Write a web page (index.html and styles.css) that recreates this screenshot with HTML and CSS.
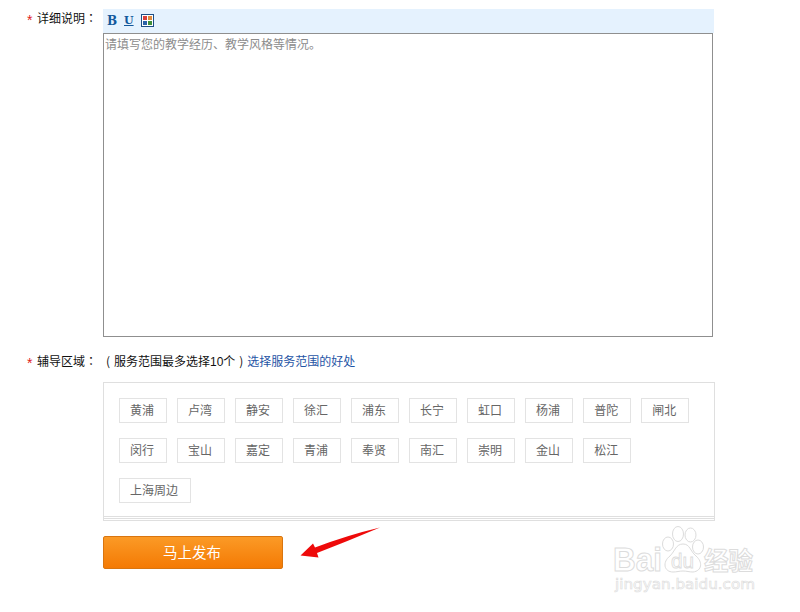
FILE: index.html
```
<!DOCTYPE html>
<html lang="zh-CN">
<head>
    <meta charset="UTF-8">
    <meta name="viewport" content="width=device-width, initial-scale=1.0">
    <title>发布家教信息</title>
    <link rel="stylesheet" href="styles.css">
</head>
<body>
    <form class="publish-form">
        <!-- Description -->
        <div class="form-row row-desc">
            <div class="row-label"><span class="required">*</span>详细说明<span class="mark">：</span></div>
            <div class="editor">
                <div class="toolbar">
                    <span class="tool tool-bold">B</span>
                    <span class="tool tool-underline">U</span>
                    <svg class="tool-color" width="13" height="13" viewBox="0 0 13 13">
                        <rect x="0.5" y="0.5" width="12" height="12" fill="#fff" stroke="#1d4f86"/>
                        <rect x="2" y="2" width="4" height="4" fill="#d8403c"/>
                        <rect x="7" y="2" width="4" height="4" fill="#e08a3c"/>
                        <rect x="2" y="7" width="4" height="4" fill="#2b62a8"/>
                        <rect x="7" y="7" width="4" height="4" fill="#3f8f3a"/>
                    </svg>
                </div>
                <textarea class="editor-text" placeholder="请填写您的教学经历、教学风格等情况。"></textarea>
            </div>
        </div>

        <!-- Service areas -->
        <div class="form-row row-area">
            <div class="row-label"><span class="required">*</span>辅导区域<span class="mark">：</span></div>
            <div class="area-tip"><span class="mark">(</span>服务范围最多选择10个<span class="mark">)</span><a class="tip-link" href="#">选择服务范围的好处</a></div>
        </div>
        <div class="area-box">
            <ul class="area-list">
                <li>黄浦</li>
                <li>卢湾</li>
                <li>静安</li>
                <li>徐汇</li>
                <li>浦东</li>
                <li>长宁</li>
                <li>虹口</li>
                <li>杨浦</li>
                <li>普陀</li>
                <li>闸北</li>
                <li>闵行</li>
                <li>宝山</li>
                <li>嘉定</li>
                <li>青浦</li>
                <li>奉贤</li>
                <li>南汇</li>
                <li>崇明</li>
                <li>金山</li>
                <li>松江</li>
                <li>上海周边</li>
            </ul>
            <div class="area-line"></div>
        </div>

        <div class="submit-row">
            <button type="button" class="submit-btn">马上发布</button>
            <svg class="arrow" width="82" height="34" viewBox="0 0 82 34">
                <path d="M0.500 27.500 L13 15.500 L15 19.500 Q48 7 80 -0.500 Q48 13 17 25 L18.500 29.500 Z" fill="#ee0a0a"/>
            </svg>
        </div>
    </form>

    <svg class="watermark" width="150" height="74" viewBox="0 0 150 74">
        <g fill="#fff" stroke="#dcdcdc">
            <ellipse cx="58" cy="21" rx="5.500" ry="7"/>
            <ellipse cx="68" cy="11" rx="5.500" ry="7.500"/>
            <ellipse cx="80.500" cy="12" rx="5.500" ry="7"/>
            <ellipse cx="88" cy="24" rx="5.500" ry="7"/>
            <path d="M73 21 C66 21 65 28 60 33 C52 39 54 49 63 49 C67 49 69 48 73 48 C77 48 79 49 83 49 C92 48 93 39 86 33 C80 28 80 21 73 21 Z"/>
            <text class="wm-brand" x="3" y="48" textLength="49" lengthAdjust="spacingAndGlyphs">Bai</text>
            <text class="wm-du" x="61" y="45" textLength="23" lengthAdjust="spacingAndGlyphs">du</text>
            <text class="wm-cn" x="94" y="47" textLength="49">经验</text>
            <text class="wm-url" x="5" y="66" textLength="140" lengthAdjust="spacingAndGlyphs">jingyan.baidu.com</text>
        </g>
    </svg>
</body>
</html>
```

FILE: styles.css
```
body {
    font-family: "Liberation Sans", "Noto Sans CJK SC", sans-serif;
    font-size: 12px;
    margin: 0;
    background-color: #fff;
    color: #111;
    overflow: hidden;
}

.publish-form {
    padding-top: 9px;
}

.form-row {
    display: flex;
}

.row-label {
    width: 76px;
    padding-left: 27px;
    line-height: 20px;
    white-space: nowrap;
}

.required {
    display: inline-block;
    width: 10px;
    color: #e02020;
    font-size: 14px;
    line-height: 12px;
    vertical-align: -2px;
}

.mark {
    display: inline-block;
    width: 12px;
    text-align: center;
    font-family: "Noto Sans CJK TC", sans-serif;
    line-height: 16px;
}

/* Editor */
.editor {
    width: 611px;
}

.toolbar {
    display: flex;
    align-items: center;
    height: 24px;
    padding-left: 4px;
    background-color: #e5f2fe;
}

.tool {
    width: 17px;
    margin-top: -1px;
    color: #12589c;
    font: bold 12px/22px "DejaVu Serif", serif;
}

.tool-underline {
    font-size: 11px;
    text-decoration: underline;
}

.tool-color {
    display: block;
    margin-top: -1px;
}

.editor-text {
    display: block;
    box-sizing: border-box;
    width: 610px;
    height: 304px;
    margin: 0;
    padding: 3px 1px;
    border: 1px solid #8f8f8f;
    resize: none;
    font: 12px/17px "Liberation Sans", "Noto Sans CJK SC", sans-serif;
}

.editor-text::placeholder {
    color: #8c8c8c;
}

/* Service areas */
.row-area {
    height: 30px;
    padding-top: 15px;
}

.area-tip {
    margin-left: -1px;
    line-height: 20px;
}

.tip-link {
    color: #1f55a5;
    text-decoration: none;
}

.area-box {
    box-sizing: border-box;
    width: 612px;
    height: 139px;
    margin-left: 103px;
    border: 1px solid #dfdfdf;
}

.area-list {
    display: flex;
    flex-wrap: wrap;
    gap: 15px 10px;
    height: 118px;
    margin: 0;
    padding: 15px 15px 0;
    list-style: none;
    align-content: flex-start;
}

.area-list li {
    box-sizing: border-box;
    height: 25px;
    padding: 0 12px 0 10px;
    border: 1px solid #e3e3e3;
    line-height: 25px;
    color: #666;
}

.area-line {
    height: 1px;
    border-top: 1px solid #dfdfdf;
    border-bottom: 1px solid #dfdfdf;
}

/* Submit */
.submit-row {
    display: flex;
    padding: 15px 0 0 103px;
}

.submit-btn {
    width: 180px;
    height: 33px;
    padding: 0 2px 2px 0;
    border: 1px solid #d9750f;
    border-radius: 2px;
    background: linear-gradient(#fb9a26, #f47a04);
    color: #fff;
    font: 14.500px/29px "Noto Sans CJK SC", sans-serif;
}

.arrow {
    margin: -8px 0 0 17px;
    overflow: visible;
}

/* Watermark */
.watermark {
    position: absolute;
    left: 610px;
    top: 523px;
}

.watermark text {
    font-family: "Liberation Sans", sans-serif;
}

.wm-brand {
    font-size: 33px;
    font-weight: bold;
}

.wm-du {
    font-size: 20px;
    stroke-width: 0.8px;
}

.watermark .wm-cn {
    font-family: "Noto Sans CJK SC", sans-serif;
    font-size: 24.500px;
    font-weight: bold;
}

.watermark .wm-url {
    font-family: "DejaVu Sans", sans-serif;
    font-size: 14px;
    stroke-width: 0.6px;
}
```
